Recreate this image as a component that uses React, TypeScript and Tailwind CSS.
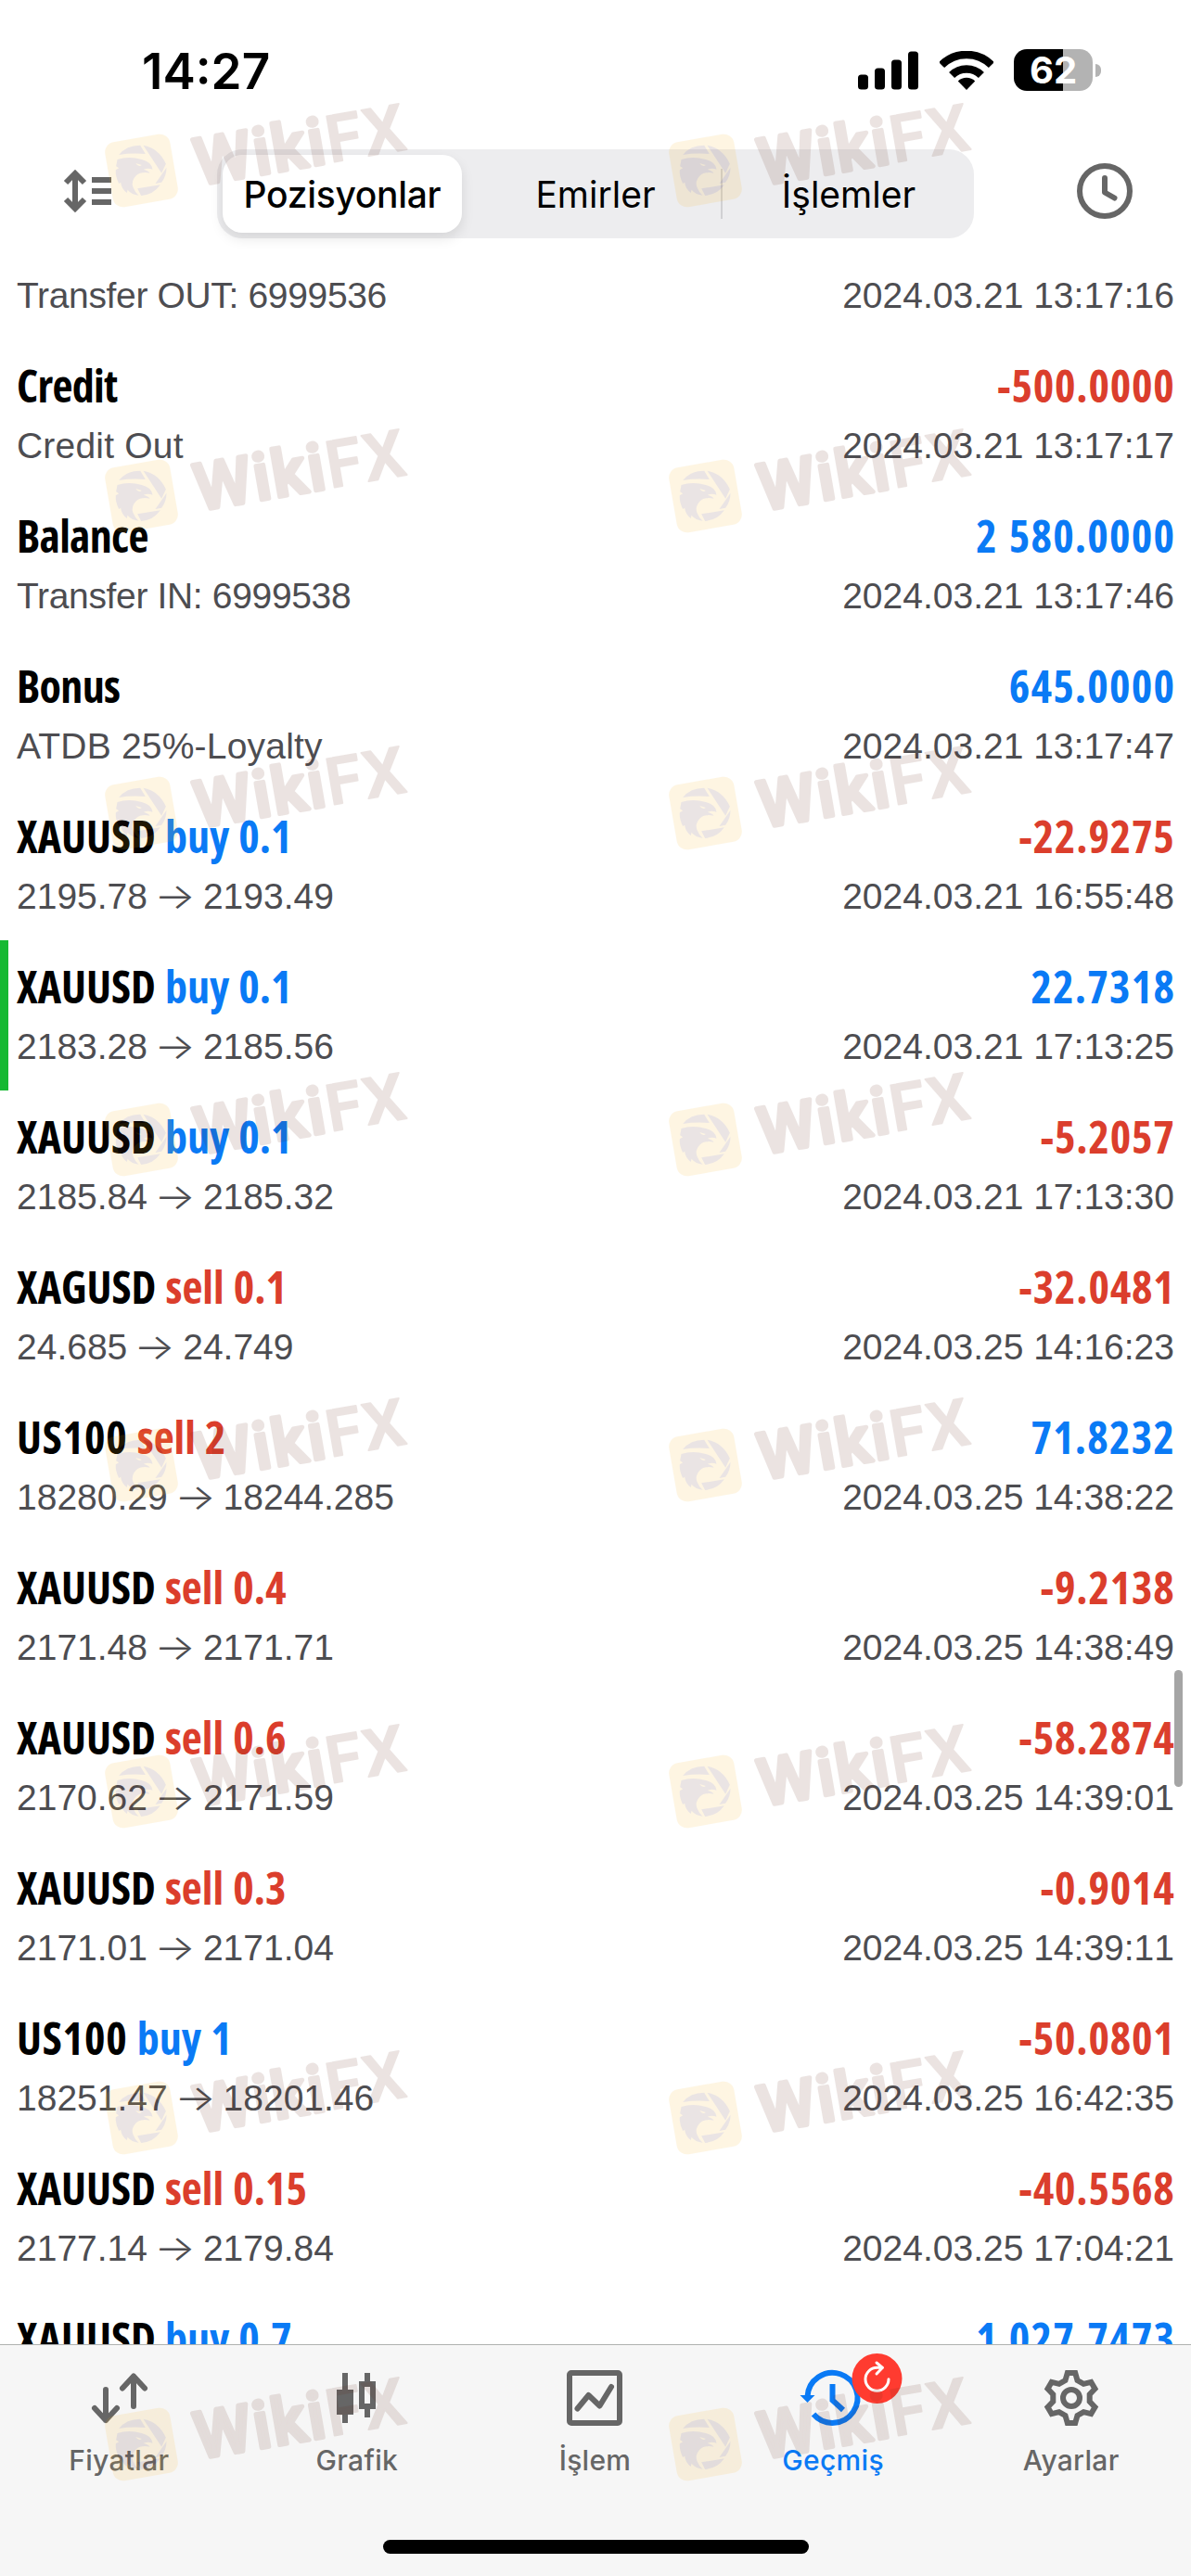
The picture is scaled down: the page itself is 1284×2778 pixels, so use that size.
const deals = [
  { symbol: "Credit", amount: "-500.0000", detail: "Credit Out", time: "2024.03.21 13:17:17" },
  { symbol: "Balance", amount: "2 580.0000", detail: "Transfer IN: 6999538", time: "2024.03.21 13:17:46" },
  { symbol: "Bonus", amount: "645.0000", detail: "ATDB 25%-Loyalty", time: "2024.03.21 13:17:47" },
  { symbol: "XAUUSD", side: "buy", lots: "0.1", amount: "-22.9275", open: "2195.78", close: "2193.49", time: "2024.03.21 16:55:48" },
  { symbol: "XAUUSD", side: "buy", lots: "0.1", amount: "22.7318", open: "2183.28", close: "2185.56", time: "2024.03.21 17:13:25", takeProfit: true },
  { symbol: "XAUUSD", side: "buy", lots: "0.1", amount: "-5.2057", open: "2185.84", close: "2185.32", time: "2024.03.21 17:13:30" },
  { symbol: "XAGUSD", side: "sell", lots: "0.1", amount: "-32.0481", open: "24.685", close: "24.749", time: "2024.03.25 14:16:23" },
  { symbol: "US100", side: "sell", lots: "2", amount: "71.8232", open: "18280.29", close: "18244.285", time: "2024.03.25 14:38:22" },
  { symbol: "XAUUSD", side: "sell", lots: "0.4", amount: "-9.2138", open: "2171.48", close: "2171.71", time: "2024.03.25 14:38:49" },
  { symbol: "XAUUSD", side: "sell", lots: "0.6", amount: "-58.2874", open: "2170.62", close: "2171.59", time: "2024.03.25 14:39:01" },
  { symbol: "XAUUSD", side: "sell", lots: "0.3", amount: "-0.9014", open: "2171.01", close: "2171.04", time: "2024.03.25 14:39:11" },
  { symbol: "US100", side: "buy", lots: "1", amount: "-50.0801", open: "18251.47", close: "18201.46", time: "2024.03.25 16:42:35" },
  { symbol: "XAUUSD", side: "sell", lots: "0.15", amount: "-40.5568", open: "2177.14", close: "2179.84", time: "2024.03.25 17:04:21" },
  { symbol: "XAUUSD", side: "buy", lots: "0.7", amount: "1 027.7473" },
];

const StatusBar = () => (
  <div className="flex h-[151px] items-center pl-[153px] pr-[97px]">
    <span className="mt-[3px] text-[53px] font-semibold leading-none">14:27</span>
    <div className="ml-auto flex items-center">
      <svg width="65" height="42" viewBox="0 0 65 42">
        <rect x="0" y="25.5" width="11" height="16" rx="3.5" />
        <rect x="18" y="18.5" width="11" height="23" rx="3.5" />
        <rect x="36" y="9.5" width="11" height="32" rx="3.5" />
        <rect x="54" y="0.5" width="11" height="41" rx="3.5" />
      </svg>
      <svg className="ml-[23px]" width="58" height="42" viewBox="0 0 58 42" fill="none" stroke="#000" strokeWidth="8.5">
        <path d="M2.1 15.1A38 38 0 0 1 55.9 15.1" />
        <path d="M13.1 26.1A22.5 22.5 0 0 1 44.9 26.1" />
        <path d="M29 42L19.8 32.6A13.2 13.2 0 0 1 38.2 32.6Z" fill="#000" stroke="none" />
      </svg>
      <div className="ml-[22px] h-[45px] w-[85px] rounded-[14px] bg-[linear-gradient(90deg,#000_53px,#b3b3b3_53px)] text-center text-[40px] font-bold leading-[45px] text-white">
        62
      </div>
      <div className="ml-[3px] h-[14px] w-[6px] rounded-r-full bg-[#b3b3b3]" />
    </div>
  </div>
);

const Toolbar = () => (
  <div className="flex h-[119px] items-start pt-2.5">
    <svg className="ml-[67px] mt-[19px]" width="54" height="52" viewBox="0 0 54 52" fill="none" stroke="#666" strokeWidth="6">
      <path d="M14 7V45M4 17L14 7L24 17M4 35L14 45L24 35M32 14H53M32 26H53M32 38H53" />
    </svg>
    <div className="ml-[113px] grid h-24 w-[816px] grid-cols-3 rounded-[27px] bg-[#ededef] text-[39px] leading-none">
      <div className="my-1.5 ml-1.5 mr-2 flex items-center justify-center rounded-[21px] bg-white font-medium tracking-[-0.3px] shadow-[0_6px_14px_rgba(0,0,0,0.1)]">
        Pozisyonlar
      </div>
      <div className="flex items-center justify-center">Emirler</div>
      <div className="flex items-center">
        <span className="-mx-px h-[54px] w-[2px] bg-[#d0d0d3]" />
        <span className="grow pl-0.5 text-center">İşlemler</span>
      </div>
    </div>
    <svg className="ml-[111px] mt-[15px]" width="60" height="60" viewBox="0 0 60 60" fill="none" stroke="#666" strokeWidth="6" strokeLinecap="round" strokeLinejoin="round">
      <circle cx="30" cy="30" r="27" />
      <path d="M30 16V31.500L40.500 37.500" />
    </svg>
  </div>
);

const Details = ({ children, time }: { children: React.ReactNode; time?: string }) => (
  <div className="flex h-[66px] items-center justify-between font-['Liberation_Sans',sans-serif] text-[39px] text-[#4d4d51]">
    <span>{children}</span>
    <span className="[font-kerning:none]">{time}</span>
  </div>
);

const Comment = ({ text }: { text: string }) => (
  <span className={text.startsWith("Transfer") ? "tracking-[-0.34px]" : "tracking-[0.2px]"}>{text}</span>
);

const DealRow = ({ deal }: { deal: (typeof deals)[number] }) => (
  <div className={`h-[162px] shrink-0 border-l-9 pl-[9px] pr-[18px] pt-4 ${deal.takeProfit ? "border-[#16b932]" : "border-transparent"}`}>
    <div className="flex h-[66px] items-center justify-between font-['Open_Sans',sans-serif] text-[48px] font-bold leading-[65px] [font-stretch:75%]">
      <span className={deal.side ? "" : "tracking-[-0.7px]"}>
        <span className={deal.symbol === "US100" ? "tracking-[0.8px]" : ""}>{deal.symbol}</span>
        {deal.side && (
          <span className={`[word-spacing:1.5px] ${deal.side === "buy" ? "text-[#0a7af5]" : "text-[#db3e2c]"}`}>
            {" "}
            {deal.side} {deal.lots}
          </span>
        )}
      </span>
      {deal.amount.startsWith("-") ? (
        <span className="-mr-[0.7px] tracking-[0.8px] text-[#db3e2c]">{deal.amount}</span>
      ) : (
        <span className="-mr-[1.2px] tracking-[1.2px] text-[#0a7af5] [word-spacing:2px]">{deal.amount}</span>
      )}
    </div>
    {deal.time && (
      <Details time={deal.time}>
        {deal.detail ? (
          <Comment text={deal.detail} />
        ) : (
          <>
            {deal.open} <span className="mr-px inline-block scale-x-120 font-['Inter'] font-light">→</span> {deal.close}
          </>
        )}
      </Details>
    )}
  </div>
);

const GearIcon = () => {
  const points: string[] = [];
  for (let i = 0; i < 6; i++) {
    const a = (i * Math.PI) / 3;
    for (const [x, y] of [[-6.5, -19], [-4.2, -27], [4.2, -27], [6.5, -19]]) {
      points.push(`${30 + x * Math.cos(a) - y * Math.sin(a)},${30 + x * Math.sin(a) + y * Math.cos(a)}`);
    }
  }
  return (
    <g>
      <polygon points={points.join(" ")} />
      <circle cx="30" cy="30" r="9" />
    </g>
  );
};

const tabs = [
  {
    label: "Fiyatlar",
    icon: <path strokeLinecap="round" strokeLinejoin="round" d="M16 21V54M4 41L16 54L28 41M46 39V7M34 19.500L46 6.500L58 19.500" />,
  },
  {
    label: "Grafik",
    icon: (
      <g>
        <path d="M17 3V57M41 3V15M41 42V51" />
        <rect x="11" y="24" width="12" height="21" fill="#666" />
        <rect x="35" y="15" width="12" height="24" />
      </g>
    ),
  },
  {
    label: "İşlem",
    icon: (
      <g strokeLinecap="round" strokeLinejoin="round">
        <rect x="3" y="3" width="54" height="54" rx="2" />
        <path d="M11.500 41.500L23.500 27L35.500 38.500L48 18" />
      </g>
    ),
  },
  {
    label: "Geçmiş",
    active: true,
    icon: (
      <g transform="translate(1.500 0)">
        <path d="M1 28.500A27 27 0 1 1 7.500 47.500" />
        <path d="M-7 27H9L1 35Z" fill="#0a7af5" stroke="none" />
        <path d="M28 15V32.500L39.500 43" />
        <circle cx="76" cy="9" r="27" fill="#ff3b30" stroke="none" />
        <path d="M82 -2.700H76A12.500 12.500 0 1 0 88.500 9.800M75.500 -8L82 -2.700L75.500 4" stroke="#fff" strokeWidth="3" strokeLinecap="round" strokeLinejoin="round" />
      </g>
    ),
  },
  { label: "Ayarlar", icon: <GearIcon /> },
];

const TabBar = () => (
  <nav className="h-[250px] border-t border-[#b0b2b0] bg-[#f6f6f6]">
    <div className="grid grid-cols-5 pr-px pt-[27px]">
      {tabs.map((tab) => (
        <div key={tab.label} className={`flex flex-col items-center ${tab.active ? "text-[#0a7af5]" : "text-[#666]"}`}>
          <svg className="overflow-visible" width="60" height="60" viewBox="0 0 60 60" fill="none" stroke="currentColor" strokeWidth="6">
            {tab.icon}
          </svg>
          <span className="mt-[17px] text-[30px] font-medium leading-10 tracking-[0.3px]">{tab.label}</span>
        </div>
      ))}
    </div>
    <div className="mx-auto mt-[66px] h-[15px] w-[459px] rounded-full bg-black" />
  </nav>
);

// Tilted brand stamp; the origin is the centre of its square logo.
const Stamp = ({ x, y }: { x: number; y: number }) => (
  <g transform={`translate(${x} ${y})`} opacity="0.12">
    <g transform="rotate(-9.800)">
      <rect x="-35.500" y="-35.500" width="71" height="71" rx="11" fill="#f7b41e" />
      <text x="58" y="26" textLength="229" fontSize="70" fontWeight="500" fill="#612616" stroke="#612616" strokeLinejoin="round" className="font-['Roboto']">
        <tspan strokeWidth="4.500">Wiki</tspan>
        <tspan strokeWidth="2">FX</tspan>
      </text>
    </g>
    <g transform="scale(0.3333) translate(-181 -298)" fill="#5c2a2a">
      <path d="M108 247Q132 216 177 216L194 244Q150 240 108 247Z" />
      <path d="M187 216Q238 226 260 276L246 306Z" />
      <path d="M262 288Q262 315 246 336L226 340Z" />
      <path d="M168 356L242 344Q220 376 180 379Z" />
      <path d="M103 262Q140 250 182 262Q214 270 217 294Q202 288 188 294Q206 300 208 306Q180 300 164 314Q146 332 154 352Q160 368 172 378Q150 376 136 360L134 370Q116 356 114 336L108 340Q96 316 98 296L108 290L99 284Z" />
      <path d="M162 274L182 280Q172 288 162 274Z" fill="#f7b41e" />
    </g>
  </g>
);

const stampRows = [184, 535, 877, 1229, 1580, 1932, 2284, 2636];

export default function App() {
  return (
    <div className="relative h-[2778px] w-[1284px] overflow-hidden bg-white font-['Inter',sans-serif] text-black">
      <StatusBar />
      <Toolbar />
      <main className="flex h-[2258px] flex-col overflow-hidden">
        <div className="h-24 shrink-0 px-[18px] pt-4">
          <Details time="2024.03.21 13:17:16">
            <Comment text="Transfer OUT: 6999536" />
          </Details>
        </div>
        {deals.map((deal, index) => (
          <DealRow key={index} deal={deal} />
        ))}
      </main>
      <TabBar />
      <div className="absolute left-[1266px] top-[1801px] h-[126px] w-[9px] rounded-full bg-[#a5a5a5]" />
      <svg className="pointer-events-none absolute inset-0" width="1284" height="2778" viewBox="0 0 1284 2778">
        {stampRows.map((y) => (
          <g key={y}>
            <Stamp x={152.5} y={y} />
            <Stamp x={760.5} y={y} />
          </g>
        ))}
      </svg>
    </div>
  );
}
